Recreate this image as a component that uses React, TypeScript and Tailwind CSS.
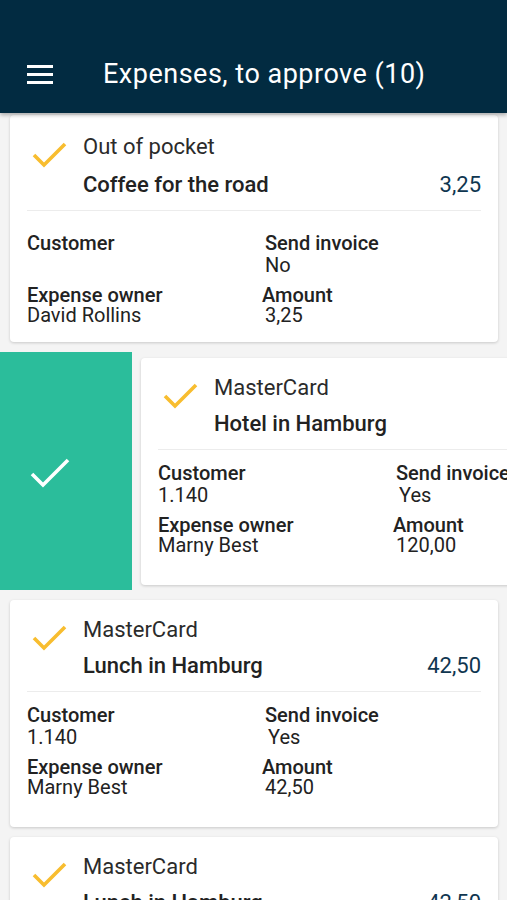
import React from "react";

const font = { fontFamily: "Roboto, 'Noto Sans', Arial, sans-serif" };

function YellowCheck() {
  return (
    <svg width="36" height="28" viewBox="0 0 36 28" className="block">
      <path d="M3 13 L13 23 L34 2" fill="none" stroke="#f8bd2f" strokeWidth="3.6" strokeLinecap="butt" strokeLinejoin="miter" />
    </svg>
  );
}

function WhiteCheck() {
  return (
    <svg width="40" height="32" viewBox="0 0 40 32" className="block">
      <path d="M2 17 L13 28 L38 3" fill="none" stroke="#ffffff" strokeWidth="3.6" />
    </svg>
  );
}

type Item = {
  type: string;
  title: string;
  amount: string;
  customer: string;
  invoice: string;
  owner: string;
};

function Card({ item, first = false }: { item: Item; first?: boolean }) {
  return (
    <div className="bg-white rounded-[4px] h-[227px] w-[488px] shrink-0 shadow-[0_1px_3px_rgba(0,0,0,0.18)]">
      <div className={`flex pr-[17px] ${first ? "pt-[18px]" : "pt-[16px]"}`}>
        <div className="w-[73px] shrink-0 pl-[21px] pt-[9px]">
          <YellowCheck />
        </div>
        <div className="flex-1">
          <div className="text-[22px] leading-[28px] text-[#2b2b2b]">{item.type}</div>
          <div className={`flex justify-between text-[22px] leading-[28px] ${first ? "mt-[10px]" : "mt-[8px]"}`}>
            <span className="font-medium text-[#222]">{item.title}</span>
            <span className="text-[#0f3650]">{item.amount}</span>
          </div>
        </div>
      </div>
      <div className="mx-[17px] h-px bg-[#ececec] mt-[11px]" />
      <div className={`grid grid-cols-[238px_1fr] px-[17px] text-[20px] text-[#222] ${first ? "pt-[21px]" : "pt-[12px]"}`}>
        <div>
          <div className="leading-[22px] font-medium">Customer</div>
          <div className="leading-[22px]">{item.customer}</div>
        </div>
        <div>
          <div className="leading-[22px] font-medium">Send invoice</div>
          <div className={`leading-[22px] ${item.invoice === "Yes" ? "pl-[3px]" : ""}`}>{item.invoice}</div>
        </div>
        <div className="mt-[10px]">
          <div className="leading-[18px] font-medium">Expense owner</div>
          <div className="leading-[19px] mt-[2px]">{item.owner}</div>
        </div>
        <div className="mt-[10px] -ml-[3px]">
          <div className="leading-[18px] font-medium">Amount</div>
          <div className="leading-[19px] mt-[2px] pl-[3px]">{item.amount}</div>
        </div>
      </div>
    </div>
  );
}

export default function App() {
  const items: Item[] = [
    { type: "Out of pocket", title: "Coffee for the road", amount: "3,25", customer: "", invoice: "No", owner: "David Rollins" },
    { type: "MasterCard", title: "Hotel in Hamburg", amount: "120,00", customer: "1.140", invoice: "Yes", owner: "Marny Best" },
    { type: "MasterCard", title: "Lunch in Hamburg", amount: "42,50", customer: "1.140", invoice: "Yes", owner: "Marny Best" },
    { type: "MasterCard", title: "Lunch in Hamburg", amount: "42,50", customer: "1.140", invoice: "Yes", owner: "Marny Best" },
  ];

  return (
    <div className="w-[507px] h-[900px] overflow-hidden bg-[#f4f4f4] relative" style={font}>
      <div className="absolute top-0 left-0 right-0 z-10 h-[113px] bg-[#022b41] shadow-[0_2px_4px_rgba(0,0,0,0.3)] flex items-end pb-[22px]">
        <div className="w-[103px] pl-[27px] pb-[7px] flex flex-col gap-[5px]">
          <div className="w-[26px] h-[3px] bg-white" />
          <div className="w-[26px] h-[3px] bg-white" />
          <div className="w-[26px] h-[3px] bg-white" />
        </div>
        <div className="text-white text-[27px] leading-[34px] tracking-[0.5px]">Expenses, to approve (10)</div>
      </div>

      <div className="flex flex-col gap-[10px] pt-[115px]">
        <div className="px-[10px]">
          <Card item={items[0]} first />
        </div>
        <div className="flex h-[238px] overflow-hidden">
          <div className="w-[132px] shrink-0 bg-[#2bbd9b] flex items-center justify-center pr-[32px] pt-[4px]">
            <WhiteCheck />
          </div>
          <div className="pl-[9px] pt-[6px]">
            <Card item={items[1]} />
          </div>
        </div>
        <div className="px-[10px]">
          <Card item={items[2]} />
        </div>
        <div className="px-[10px]">
          <Card item={items[3]} />
        </div>
      </div>
    </div>
  );
}
